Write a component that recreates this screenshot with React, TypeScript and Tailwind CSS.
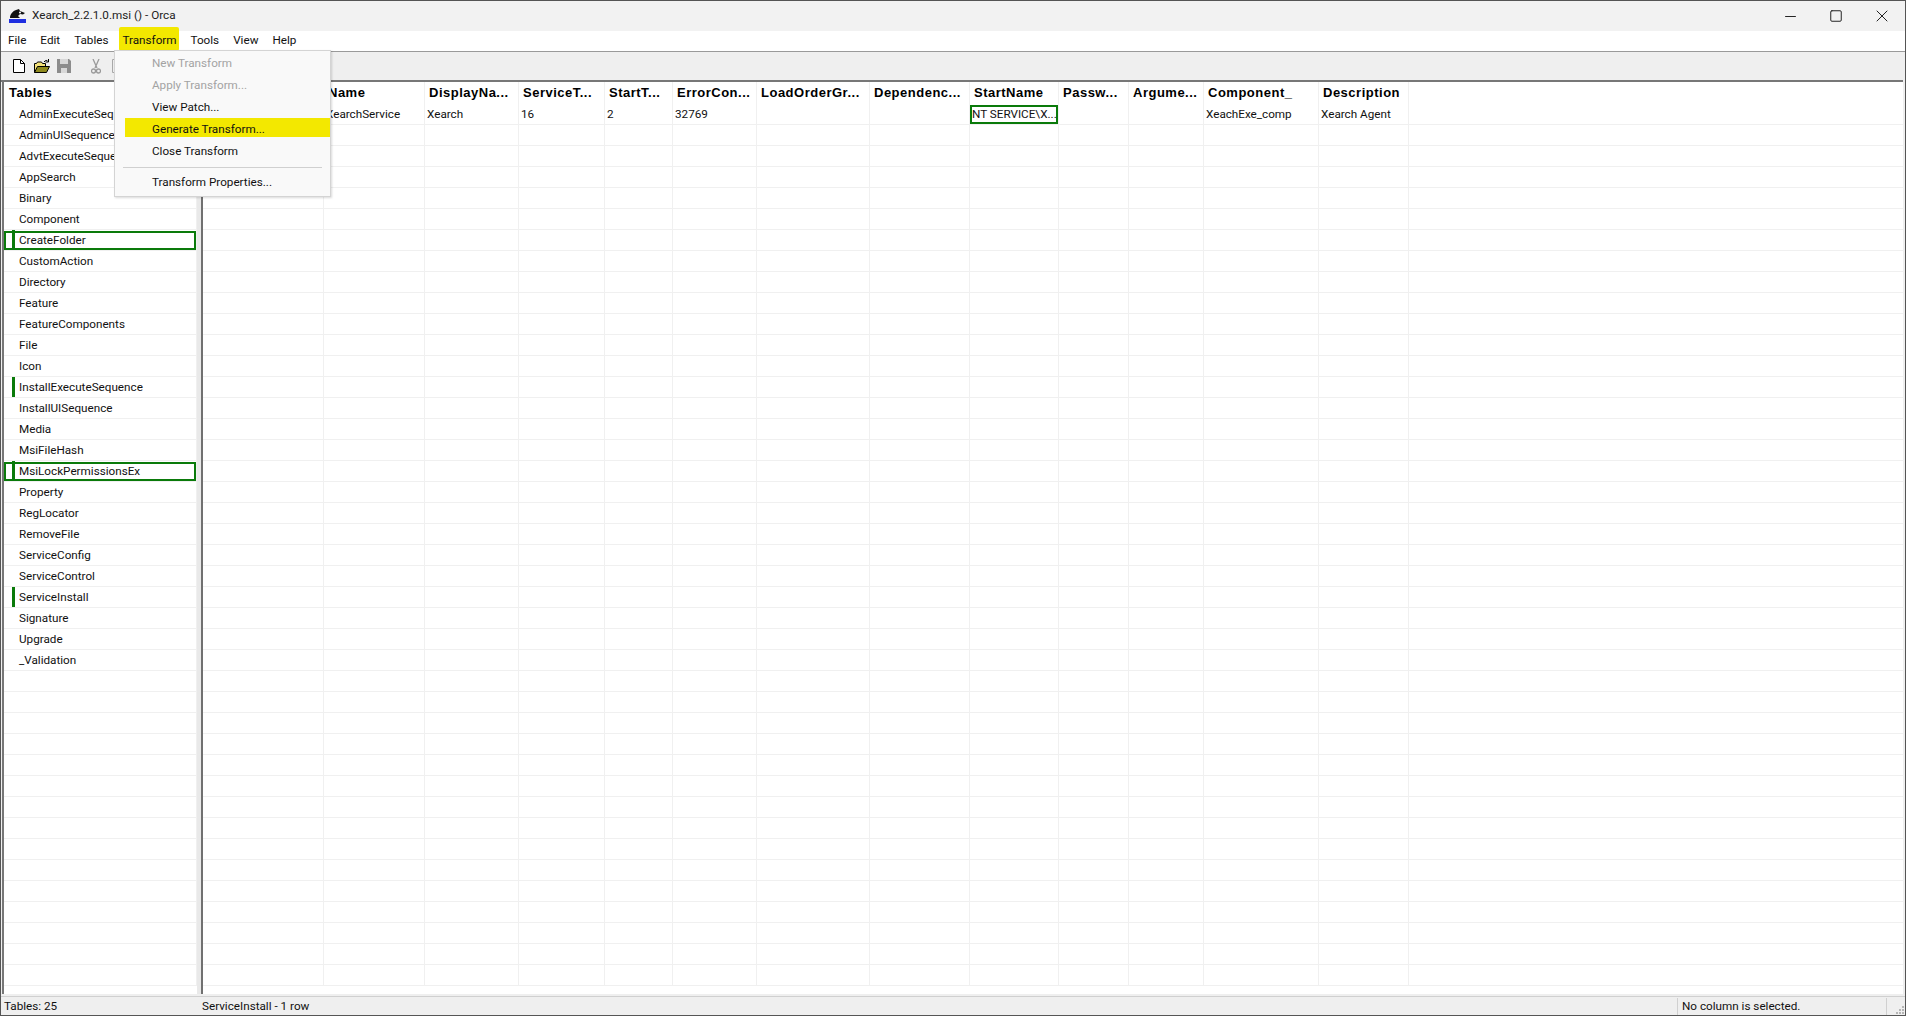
import React from 'react'
import { Minus, Square, X } from 'lucide-react'

const MENUS = ['File', 'Edit', 'Tables', 'Transform', 'Tools', 'View', 'Help']

const TABLES = [
  'AdminExecuteSequence', 'AdminUISequence', 'AdvtExecuteSequence', 'AppSearch', 'Binary', 'Component',
  'CreateFolder', 'CustomAction', 'Directory', 'Feature', 'FeatureComponents', 'File', 'Icon',
  'InstallExecuteSequence', 'InstallUISequence', 'Media', 'MsiFileHash', 'MsiLockPermissionsEx', 'Property',
  'RegLocator', 'RemoveFile', 'ServiceConfig', 'ServiceControl', 'ServiceInstall', 'Signature', 'Upgrade', '_Validation',
]
const BOXED = ['CreateFolder', 'MsiLockPermissionsEx']
const BARRED = ['InstallExecuteSequence', 'ServiceInstall']

const COLUMNS = [
  { name: '', width: 121, value: '' },
  { name: 'Name', width: 101, value: 'XearchService' },
  { name: 'DisplayNa...', width: 94, value: 'Xearch' },
  { name: 'ServiceT...', width: 86, value: '16' },
  { name: 'StartT...', width: 68, value: '2' },
  { name: 'ErrorCon...', width: 84, value: '32769' },
  { name: 'LoadOrderGr...', width: 113, value: '' },
  { name: 'Dependenc...', width: 100, value: '' },
  { name: 'StartName', width: 89, value: 'NT SERVICE\\X...' },
  { name: 'Passw...', width: 70, value: '' },
  { name: 'Argume...', width: 75, value: '' },
  { name: 'Component_', width: 115, value: 'XeachExe_comp' },
  { name: 'Description', width: 90, value: 'Xearch Agent' },
]

const ROW_COUNT = 42
const rows = Array.from({ length: ROW_COUNT }, (_, i) => i)

function Toolbar() {
  return (
    <div className="h-[28px] bg-[#efefef] flex items-center pl-[12px]">
      <svg width="12" height="14" viewBox="0 0 12 14">
        <path d="M.5.5h7l4 4v9h-11z" fill="#fff" stroke="#000" />
        <path d="M7.500.5v4h4" fill="none" stroke="#000" />
      </svg>
      <svg width="16" height="14" viewBox="0 0 16 14" className="ml-[9px]">
        <path d="M.5 13.500v-9h2l1-1.500h4l1 1.500h3v3" fill="#f4e27a" stroke="#000" />
        <path d="M.5 13.500l3-6h12l-3 6z" fill="#8f8a1e" stroke="#000" />
        <path d="M10 3c1.500-2 3-2 4-.5M14.500 0v3h-3" fill="none" stroke="#000" />
      </svg>
      <svg width="14" height="14" viewBox="0 0 14 14" className="ml-[7px]">
        <path d="M0 0h12l2 2v12H0z" fill="#8c8c8c" />
        <rect x="3" y="0" width="8" height="5" fill="#d8d8d8" />
        <rect x="4" y="9" width="6" height="5" fill="#d8d8d8" />
      </svg>
      <svg width="10" height="15" viewBox="0 0 10 15" className="ml-[20px]">
        <path d="M2 0l4 9M8 0L4 9" fill="none" stroke="#9a9a9a" strokeWidth="1.300" />
        <circle cx="2.500" cy="12" r="2" fill="none" stroke="#9a9a9a" strokeWidth="1.300" />
        <circle cx="7.500" cy="12" r="2" fill="none" stroke="#9a9a9a" strokeWidth="1.300" />
      </svg>
      <svg width="8" height="14" viewBox="0 0 8 14" className="ml-[11px]">
        <path d="M.5.5h7v13h-7z" fill="none" stroke="#a8a8a8" />
      </svg>
    </div>
  )
}

function HeaderLabel({ children }: { children: React.ReactNode }) {
  return <span className="font-['Liberation_Sans'] font-bold tracking-[0.5px] text-[13px] text-black whitespace-nowrap">{children}</span>
}

function TablePane() {
  return (
    <div className="w-[193px] shrink-0 flex flex-col overflow-hidden">
      <div className="h-[22px] shrink-0 pl-[5px] flex items-center"><HeaderLabel>Tables</HeaderLabel></div>
      {TABLES.map(t => (
        <div key={t} className="relative h-[21px] shrink-0 border-b border-r border-[#f0f0f0] pl-[15px] pt-[2px] flex items-center">
          {t}
          {BOXED.includes(t) && (
            <span className="absolute left-0 top-[1px] w-[192px] h-[19px] border-2 border-[#0a7a0a]" />
          )}
          {(BOXED.includes(t) || BARRED.includes(t)) && (
            <span className="absolute left-[8px] top-0 w-[3px] h-[20px] bg-[#0a7a0a]" />
          )}
        </div>
      ))}
      {rows.slice(TABLES.length).map(i => (
        <div key={i} className="h-[21px] shrink-0 border-b border-r border-[#f0f0f0]" />
      ))}
    </div>
  )
}

function DataGrid() {
  return (
    <div className="flex-1 flex flex-col overflow-hidden">
      <div className="h-[22px] shrink-0 flex">
        {COLUMNS.map((c, i) => (
          <div
            key={i}
            style={{ width: c.width }}
            className="shrink-0 border-r border-[#f0f0f0] pl-[4px] flex items-center"
          >
            <HeaderLabel>{c.name}</HeaderLabel>
          </div>
        ))}
      </div>
      {rows.map(r => (
        <div key={r} className="h-[21px] shrink-0 flex border-b border-[#f0f0f0]">
          {COLUMNS.map((c, i) => (
            <div
              key={i}
              style={{ width: c.width }}
              className="relative shrink-0 border-r border-[#f0f0f0] pl-[2px] pt-[2px] flex items-center whitespace-nowrap"
            >
              {r === 0 && c.value}
              {r === 0 && c.name === 'StartName' && (
                <span className="absolute inset-x-0 top-[1px] bottom-0 border-2 border-[#0a7a0a]" />
              )}
            </div>
          ))}
          <div className="flex-1" />
        </div>
      ))}
    </div>
  )
}

function TransformMenu() {
  return (
    <div className="absolute left-[113px] top-[49px] w-[217px] h-[147px] bg-[#f9f9f9] border border-[#d4d4d4] shadow-[1px_1px_2px_rgba(0,0,0,0.15)] z-10">
      <div className="absolute left-[10px] top-[67px] w-[205px] h-[19px] bg-[#f3e800]" />
      <div className="relative pl-[37px] pt-[2px] flex flex-col">
        <div className="h-[22px] flex items-center text-[#a3a3a3]">New Transform</div>
        <div className="h-[22px] flex items-center text-[#a3a3a3]">Apply Transform...</div>
        <div className="h-[22px] flex items-center">View Patch...</div>
        <div className="h-[22px] flex items-center">Generate Transform...</div>
        <div className="h-[22px] flex items-center">Close Transform</div>
      </div>
      <div className="relative mx-[8px] mt-[4px] mb-[4px] border-t border-[#d0d0d0]" />
      <div className="relative pl-[37px] h-[22px] flex items-center">Transform Properties...</div>
    </div>
  )
}

export default function App() {
  return (
    <div className="relative w-[1906px] h-[1016px] overflow-hidden bg-[#efefef] font-['Roboto',sans-serif] text-[11.7px] text-[#111] border border-[#555]">
      {/* title bar */}
      <div className="h-[30px] bg-[#f2f2f2] flex items-center pl-[8px]">
        <svg width="17" height="14" viewBox="0 0 17 14" className="mr-[6px]">
          <path d="M1 9c0-4 3-7 6-8l3-1 1 2 5 2-2 1.500-3-.5-2 2 2 2H1z" fill="#111" />
          <circle cx="11" cy="3.500" r="1" fill="#fff" />
          <rect x="0" y="10" width="17" height="4" fill="#1f2fe0" />
        </svg>
        <span className="text-[#222]">Xearch_2.2.1.0.msi () - Orca</span>
        <div className="ml-auto flex items-center text-[#222]">
          <Minus size={17} strokeWidth={1.400} className="mr-[30px]" />
          <Square size={14} strokeWidth={1.700} className="mr-[29px]" />
          <X size={20} strokeWidth={1.200} className="mr-[13px]" />
        </div>
      </div>

      {/* menu bar */}
      <div className="h-[20px] bg-white flex items-center pl-[7px] gap-[14px]">
        {MENUS.map(m => (
          <span key={m} className="relative">
            {m === 'Transform' && (
              <span className="absolute left-[-3px] right-[-2px] top-[-5px] h-[24px] bg-[#f3e800] rounded-[2px]" />
            )}
            <span className="relative">{m}</span>
          </span>
        ))}
      </div>

      <div className="h-[1px] bg-[#9a9a9a]" />
      <Toolbar />
      <div className="h-[2px] bg-[#777] mr-[2px]" />

      {/* panes */}
      <div className="h-[912px] flex bg-white ml-[1px] mr-[2px] border-l-2 border-[#777]">
        <TablePane />
        <div className="w-[6px] shrink-0 flex">
          <div className="w-[4px] bg-[#e9e9e9]" />
          <div className="w-[2px] bg-[#707070]" />
        </div>
        <DataGrid />
      </div>
      <div className="h-[2px]" />

      {/* status bar */}
      <div className="h-[19px] border-t border-[#d0d0d0] bg-[#efefef] flex items-center pt-[1px]">
        <div className="w-[201px] pl-[3px]">Tables: 25</div>
        <div className="flex-1">ServiceInstall - 1 row</div>
        <div className="w-[209px] h-full border-l border-[#d0d0d0] pl-[4px] flex items-center">No column is selected.</div>
        <div className="w-[19px] h-full border-l border-[#d0d0d0] flex items-end justify-end pr-[1px] pb-[1px]">
          <svg width="9" height="9" viewBox="0 0 9 9" fill="#b5b5b5" className="shrink-0">
            <rect x="7" y="1" width="2" height="2" />
            <rect x="4" y="4" width="2" height="2" />
            <rect x="7" y="4" width="2" height="2" />
            <rect x="1" y="7" width="2" height="2" />
            <rect x="4" y="7" width="2" height="2" />
            <rect x="7" y="7" width="2" height="2" />
          </svg>
        </div>
      </div>

      <TransformMenu />
    </div>
  )
}
